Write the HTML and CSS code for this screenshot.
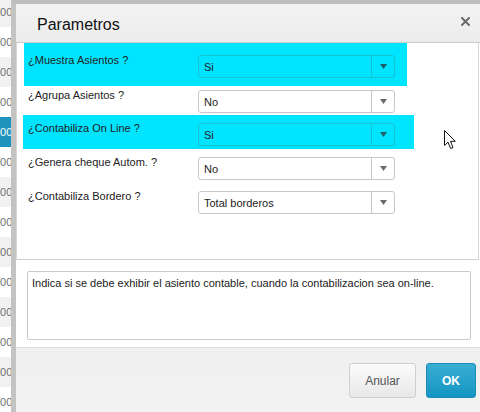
FILE: index.html
```html
<!DOCTYPE html>
<html lang="es">
<head>
    <meta charset="UTF-8">
    <title>Parametros</title>
    <link rel="stylesheet" href="styles.css">
</head>
<body>

<div class="page">
    <!-- grilla de fondo, tapada por el dialogo -->
    <div class="grid-strip">
        <div class="cell alt">000</div>
        <div class="cell">000</div>
        <div class="cell alt">000</div>
        <div class="cell">000</div>
        <div class="cell selected">000</div>
        <div class="cell">000</div>
        <div class="cell alt">000</div>
        <div class="cell">000</div>
        <div class="cell alt">000</div>
        <div class="cell">000</div>
        <div class="cell alt">000</div>
        <div class="cell">000</div>
        <div class="cell alt">000</div>
        <div class="cell">000</div>
    </div>

    <div class="dialog">
        <div class="dlg-head">
            <span class="dlg-title">Parametros</span>
            <span class="dlg-close">
                <svg width="9" height="9" viewBox="0 0 9 9">
                    <path d="M1 1 L8 8 M8 1 L1 8" stroke="#6a6a6a" stroke-width="2" stroke-linecap="square"/>
                </svg>
            </span>
        </div>

        <div class="params">
            <div class="param hl first">
                <span class="param-label">¿Muestra Asientos ?</span>
                <div class="combo">
                    <span class="combo-val">Si</span>
                    <span class="combo-btn"><svg width="7" height="5" viewBox="0 0 7 5"><path d="M0 0 H7 L3.5 5 Z"/></svg></span>
                </div>
            </div>
            <div class="param second">
                <span class="param-label">¿Agrupa Asientos ?</span>
                <div class="combo">
                    <span class="combo-val">No</span>
                    <span class="combo-btn"><svg width="7" height="5" viewBox="0 0 7 5"><path d="M0 0 H7 L3.5 5 Z"/></svg></span>
                </div>
            </div>
            <div class="param hl wide">
                <span class="param-label">¿Contabiliza On Line ?</span>
                <div class="combo">
                    <span class="combo-val">Si</span>
                    <span class="combo-btn"><svg width="7" height="5" viewBox="0 0 7 5"><path d="M0 0 H7 L3.5 5 Z"/></svg></span>
                </div>
            </div>
            <div class="param">
                <span class="param-label">¿Genera cheque Autom. ?</span>
                <div class="combo">
                    <span class="combo-val">No</span>
                    <span class="combo-btn"><svg width="7" height="5" viewBox="0 0 7 5"><path d="M0 0 H7 L3.5 5 Z"/></svg></span>
                </div>
            </div>
            <div class="param">
                <span class="param-label">¿Contabiliza Bordero ?</span>
                <div class="combo">
                    <span class="combo-val">Total borderos</span>
                    <span class="combo-btn"><svg width="7" height="5" viewBox="0 0 7 5"><path d="M0 0 H7 L3.5 5 Z"/></svg></span>
                </div>
            </div>
        </div>

        <div class="help">
            <div class="help-box">Indica si se debe exhibir el asiento contable, cuando la contabilizacion sea on-line.</div>
        </div>

        <div class="dlg-foot">
            <button class="btn">Anular</button>
            <button class="btn btn-ok">OK</button>
        </div>
    </div>
</div>

<!-- puntero del mouse -->
<svg class="cursor" width="13" height="20" viewBox="0 0 13 20">
    <path d="M0.5 0.5 L0.5 15.5 L4 12.2 L6.6 18.5 L9 17.5 L6.5 11.3 L11.3 11.3 Z" fill="#fff" stroke="#111" stroke-width="1" stroke-linejoin="miter"/>
</svg>

</body>
</html>
```

FILE: styles.css
```css
body {
    margin: 0;
    width: 480px;
    height: 412px;
    overflow: hidden;
    font-family: "Liberation Sans", Arial, sans-serif;
    font-size: 11px;
    color: #222;
    position: relative;
}

.page {
    display: flex;
    height: 412px;
}

/* columna de la grilla que queda detras del dialogo */
.grid-strip {
    width: 11px;
    overflow: hidden;
    margin-top: -3px;
    flex-shrink: 0;
}

.cell {
    height: 30px;
    line-height: 30px;
    font-size: 11px;
    color: #707070;
    text-indent: -6px;
    white-space: nowrap;
    background: #fff;
}

.cell.alt {
    background: #f1f1f1;
}

.cell.selected {
    background: #1e94bd;
    color: #fff;
}

.dialog {
    flex: 1;
    display: flex;
    flex-direction: column;
    border-left: 5px solid #c3c3c3;
    border-top: 4px solid #bdbdbd;
    background: #fff;
}

.dlg-head {
    height: 39px;
    box-sizing: border-box;
    padding: 11px 10px 0 21px;
    display: flex;
    justify-content: space-between;
    align-items: flex-start;
    background: linear-gradient(#f3f3f3, #ececec);
    border-bottom: 1px solid #cdcdcd;
}

.dlg-title {
    font-size: 16px;
    line-height: 19px;
    color: #111;
}

.dlg-close {
    margin-top: 2px;
    display: flex;
}

.params {
    height: 216px;
    margin-right: 1px;
    border-left: 1px solid #d6d6d6;
    border-right: 1px solid #d6d6d6;
    border-bottom: 1px solid #cfcfcf;
}

.param {
    display: flex;
    align-items: flex-start;
    height: 34px;
    box-sizing: border-box;
    margin-left: 7px;
    padding: 8px 0 0 4px;
    width: 383px;
}

.param.first {
    height: 43px;
    padding-top: 12px;
}

.param.second {
    height: 29px;
    padding-top: 4px;
}

.param.wide {
    margin-left: 6px;
    padding-left: 5px;
    width: 391px;
}

.param.hl {
    background: #00e5ff;
}

.param-label {
    width: 170px;
    line-height: 13px;
    margin-top: -1px;
}

.combo {
    width: 197px;
    height: 23px;
    box-sizing: border-box;
    border: 1px solid #c8c8c8;
    border-radius: 3px;
    display: flex;
    align-items: center;
}

.combo-val {
    flex: 1;
    padding-left: 5px;
}

.combo-btn {
    width: 22px;
    height: 100%;
    border-left: 1px solid #c8c8c8;
    display: flex;
    align-items: center;
    justify-content: center;
}

.combo-btn svg {
    fill: #6b6b6b;
}

.param.hl .combo,
.param.hl .combo-btn {
    border-color: #18c3cf;
}

.param.hl .combo-btn svg {
    fill: #1d5e68;
}

.help {
    padding: 11px 9px 7px 11px;
}

.help-box {
    height: 69px;
    box-sizing: border-box;
    border: 1px solid #c9c9c9;
    border-radius: 2px;
    padding: 5px 4px;
    line-height: 13px;
}

.dlg-foot {
    flex: 1;
    display: flex;
    justify-content: flex-end;
    align-items: flex-start;
    gap: 10px;
    padding: 15px 4px 0 0;
    background: linear-gradient(#efefef, #f3f3f3);
    border-top: 1px solid #dcdcdc;
}

.btn {
    height: 35px;
    width: 67px;
    font-family: "Liberation Sans", Arial, sans-serif;
    font-size: 12px;
    color: #555;
    background: linear-gradient(#fbfbfb, #e8e8e8);
    border: 1px solid #cfcfcf;
    border-radius: 3px;
    padding: 0;
}

.btn-ok {
    width: 50px;
    color: #fff;
    font-weight: bold;
    background: linear-gradient(#39add4, #1495c2);
    border-color: #1a8db8;
}

.cursor {
    position: absolute;
    left: 444px;
    top: 130px;
}
```
